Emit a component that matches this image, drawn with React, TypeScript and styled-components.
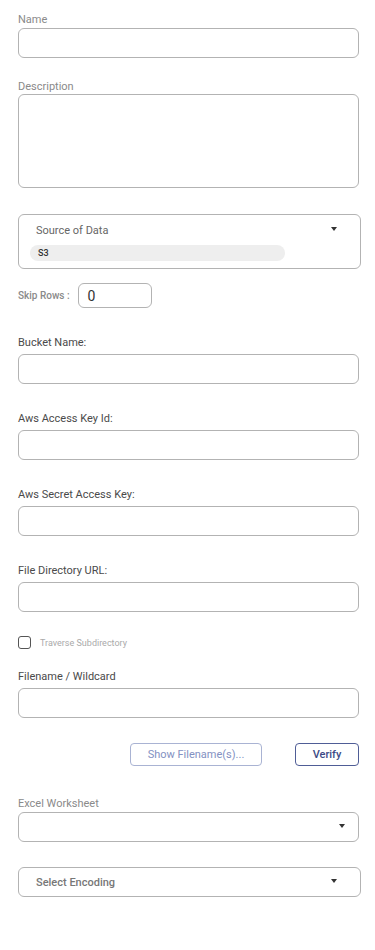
import React from "react";
import styled, { createGlobalStyle } from "styled-components";

const Global = createGlobalStyle`
  html, body { margin: 0; padding: 0; background: #fff; }
  body { font-family: Roboto, "Noto Sans", Arial, sans-serif; }
  * { box-sizing: border-box; }
`;

const Page = styled.div`
  display: flex;
  flex-direction: column;
  padding: 13px 16px 40px 18px;
  width: 375px;
`;

const Field = styled.div<{ $mt?: number }>`
  display: flex;
  flex-direction: column;
  margin-top: ${(p) => p.$mt ?? 0}px;
`;

const Label = styled.label<{ $dark?: boolean; $mb?: number }>`
  font-size: 11px;
  line-height: 13px;
  height: 13px;
  color: ${(p) => (p.$dark ? "#4a4a4a" : "#8a8a8a")};
  margin-bottom: ${(p) => p.$mb ?? 2}px;
`;

const TextInput = styled.div<{ $h?: number }>`
  width: 341px;
  height: ${(p) => p.$h ?? 30}px;
  border: 1px solid #b3b3b3;
  border-radius: 6px;
  background: #fff;
`;

const SourceBox = styled.div<{ $mt: number }>`
  margin-top: ${(p) => p.$mt}px;
  width: 343px;
  height: 55px;
  border: 1px solid #b3b3b3;
  border-radius: 6px;
  padding: 8px 11px 0 11px;
  display: flex;
  flex-direction: column;
`;

const SourceHead = styled.div`
  display: flex;
  align-items: center;
  justify-content: space-between;
  padding-left: 6px;
  padding-right: 12px;
  height: 14px;
`;

const SourceTitle = styled.span`
  font-size: 11px;
  color: #666;
`;

const Chip = styled.div`
  margin-top: 8px;
  width: 255px;
  height: 16px;
  border-radius: 8px;
  background: #eeeeee;
  font-size: 9px;
  font-weight: 500;
  color: #333;
  padding-left: 8px;
  display: flex;
  align-items: center;
`;

const Caret = styled.span`
  width: 0;
  height: 0;
  border-left: 3.5px solid transparent;
  border-right: 3.5px solid transparent;
  border-top: 4px solid #333;
  margin-top: -2px;
`;

const SkipRow = styled.div<{ $mt: number }>`
  margin-top: ${(p) => p.$mt}px;
  display: flex;
  align-items: center;
  gap: 8px;
`;

const SkipLabel = styled.span`
  font-size: 10px;
  font-weight: 500;
  color: #8a8a8a;
`;

const SmallInput = styled.div`
  width: 74px;
  height: 25px;
  border: 1px solid #b3b3b3;
  border-radius: 6px;
  font-size: 14px;
  color: #333;
  padding-left: 9px;
  display: flex;
  align-items: center;
`;

const CheckRow = styled.div<{ $mt: number }>`
  margin-top: ${(p) => p.$mt}px;
  display: flex;
  align-items: center;
  gap: 9px;
  height: 13px;
`;

const Box = styled.span`
  width: 13px;
  height: 13px;
  border: 1.5px solid #555;
  border-radius: 3px;
`;

const CheckText = styled.span`
  font-size: 9px;
  color: #aaa;
`;

const ButtonRow = styled.div<{ $mt: number }>`
  margin-top: ${(p) => p.$mt}px;
  width: 341px;
  display: flex;
  justify-content: flex-end;
  gap: 33px;
`;

const Button = styled.button<{ $primary?: boolean; $w: number }>`
  width: ${(p) => p.$w}px;
  height: 23px;
  background: #fff;
  border-radius: 4px;
  border: 1px solid ${(p) => (p.$primary ? "#4f5d96" : "#a9b3d3")};
  color: ${(p) => (p.$primary ? "#3c4a86" : "#8391c2")};
  font-family: Roboto, Arial, sans-serif;
  font-size: 11px;
  font-weight: ${(p) => (p.$primary ? 500 : 400)};
  padding: 0;
`;

const SelectBox = styled.div<{ $w: number; $pl: number; $pr: number }>`
  width: ${(p) => p.$w}px;
  height: 30px;
  border: 1px solid #b3b3b3;
  border-radius: 6px;
  display: flex;
  align-items: center;
  justify-content: space-between;
  padding: 0 ${(p) => p.$pr}px 0 ${(p) => p.$pl}px;
`;

const SelectText = styled.span`
  font-size: 11px;
  font-weight: 500;
  color: #777;
`;

const Outer = styled.div<{ $mt: number }>`
  margin-top: ${(p) => p.$mt}px;
`;

export default function App() {
  return (
    <>
      <Global />
      <Page>
        <Field>
          <Label>Name</Label>
          <TextInput />
        </Field>
        <Field $mt={22}>
          <Label $mb={1}>Description</Label>
          <TextInput $h={94} />
        </Field>
        <SourceBox $mt={26}>
          <SourceHead>
            <SourceTitle>Source of Data</SourceTitle>
            <Caret />
          </SourceHead>
          <Chip>S3</Chip>
        </SourceBox>
        <SkipRow $mt={14}>
          <SkipLabel>Skip Rows :</SkipLabel>
          <SmallInput>0</SmallInput>
        </SkipRow>
        <Field $mt={28}>
          <Label $dark $mb={5}>Bucket Name:</Label>
          <TextInput />
        </Field>
        <Field $mt={28}>
          <Label $dark $mb={5}>Aws Access Key Id:</Label>
          <TextInput />
        </Field>
        <Field $mt={28}>
          <Label $dark $mb={5}>Aws Secret Access Key:</Label>
          <TextInput />
        </Field>
        <Field $mt={28}>
          <Label $dark $mb={5}>File Directory URL:</Label>
          <TextInput />
        </Field>
        <CheckRow $mt={24}>
          <Box />
          <CheckText>Traverse Subdirectory</CheckText>
        </CheckRow>
        <Field $mt={21}>
          <Label $dark $mb={5}>Filename / Wildcard</Label>
          <TextInput />
        </Field>
        <ButtonRow $mt={25}>
          <Button $w={132}>Show Filename(s)...</Button>
          <Button $primary $w={64}>Verify</Button>
        </ButtonRow>
        <Field $mt={31}>
          <Label>Excel Worksheet</Label>
          <SelectBox $w={341} $pl={18} $pr={13}>
            <span />
            <Caret />
          </SelectBox>
        </Field>
        <Outer $mt={25}>
          <SelectBox $w={343} $pl={17} $pr={23}>
            <SelectText>Select Encoding</SelectText>
            <Caret />
          </SelectBox>
        </Outer>
      </Page>
    </>
  );
}
